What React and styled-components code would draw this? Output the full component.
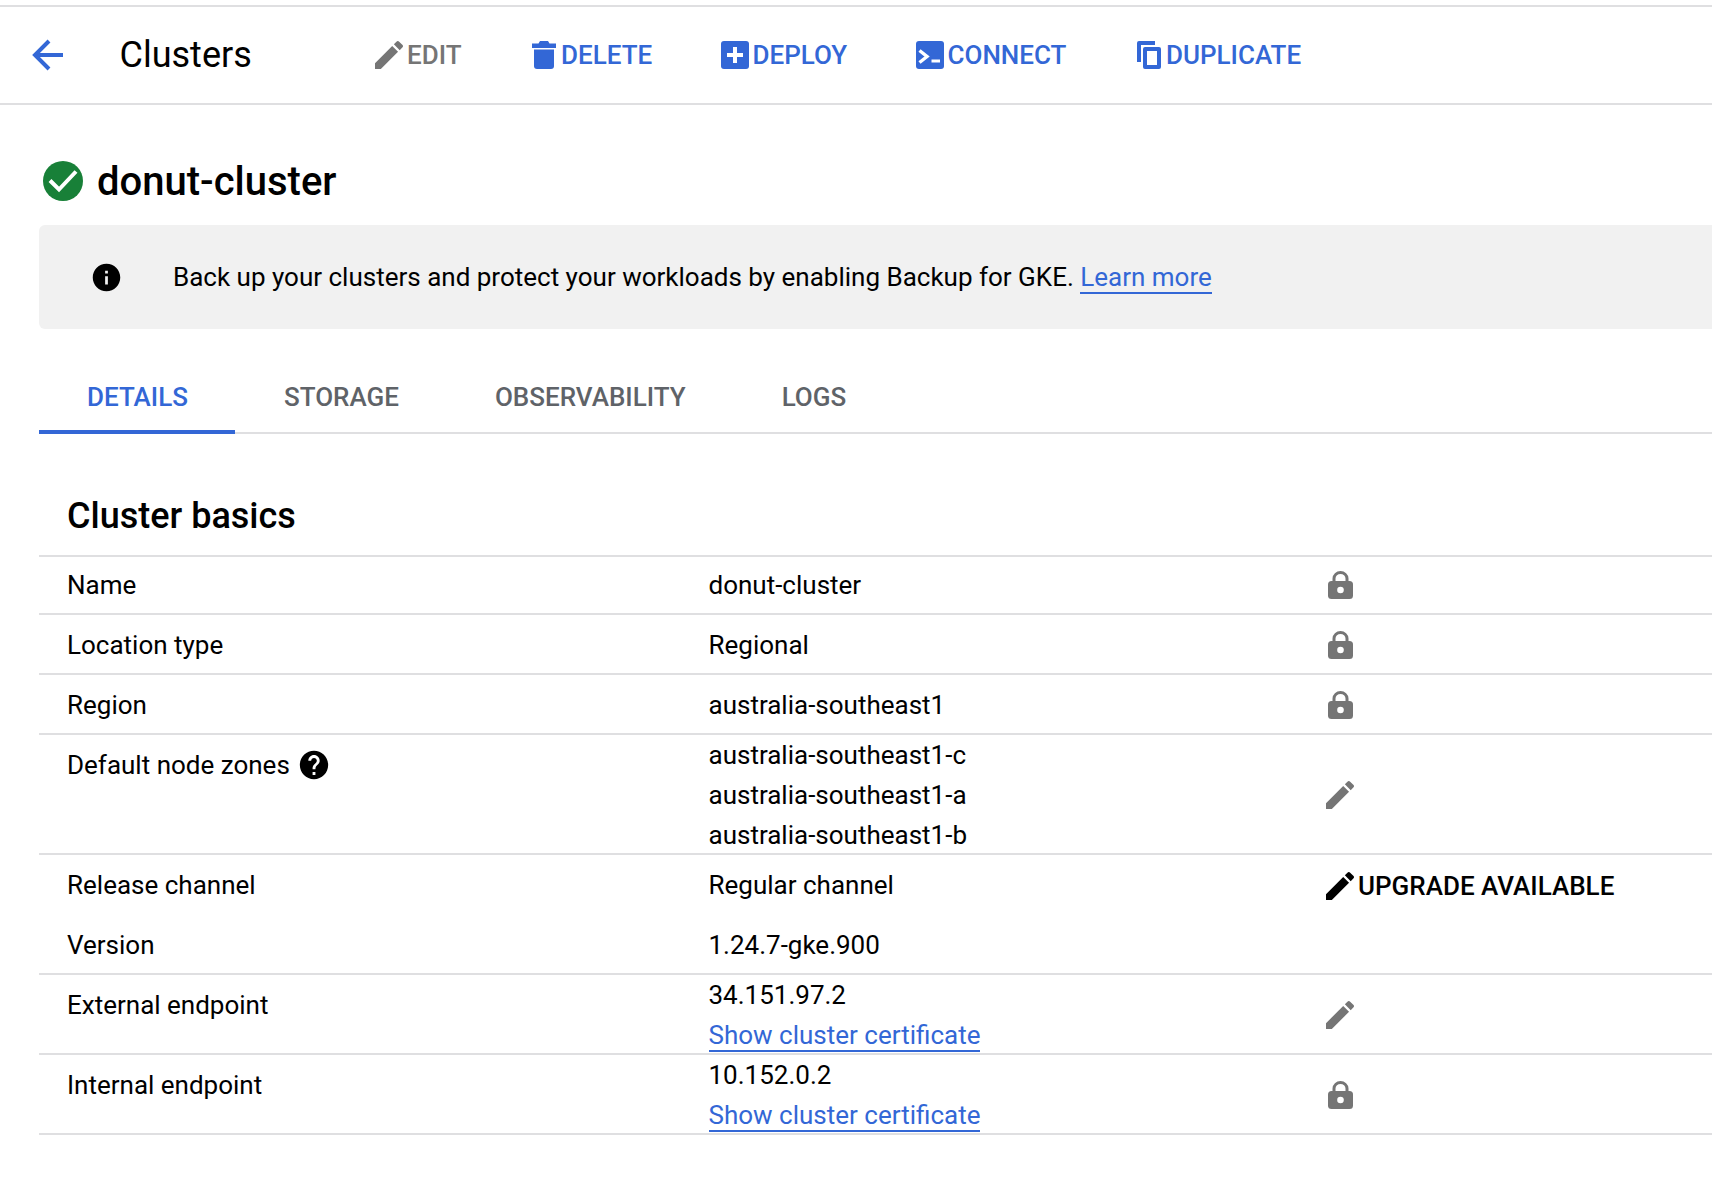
import React from "react";
import styled, { createGlobalStyle } from "styled-components";

const Global = createGlobalStyle`
  html, body { margin: 0; padding: 0; background: #fff; }
  body { font-family: Roboto, "Liberation Sans", sans-serif; color: #000; }
  * { box-sizing: border-box; }
`;

const BLUE = "#3367d6";
const GREY = "#757575";
const LINE = "#dfdfe1";

const P = {
  edit: "M3 17.25V21h3.75L17.81 9.94l-3.75-3.75L3 17.25zM20.71 7.04c.39-.39.39-1.02 0-1.41l-2.34-2.34c-.39-.39-1.02-.39-1.41 0l-1.83 1.83 3.75 3.75 1.83-1.83z",
  help: "M12 2C6.48 2 2 6.48 2 12s4.48 10 10 10 10-4.48 10-10S17.52 2 12 2zm1 17h-2v-2h2v2zm2.07-7.75l-.9.92C13.45 12.9 13 13.5 13 15h-2v-.5c0-1.1.45-2.1 1.17-2.83l1.24-1.26c.37-.36.59-.86.59-1.41 0-1.1-.9-2-2-2s-2 .9-2 2H8c0-2.21 1.79-4 4-4s4 1.79 4 4c0 .88-.36 1.68-.93 2.25z",
  info: "M12 2C6.48 2 2 6.48 2 12s4.48 10 10 10 10-4.48 10-10S17.52 2 12 2zm1 15h-2v-6h2v6zm0-8h-2V7h2v2z",
};

const Icon = ({ d, size = 24 }) => (
  <svg width={size} height={size} viewBox="0 0 24 24" fill="currentColor" style={{ flex: "none" }}>
    <path d={d} />
  </svg>
);

const PencilIcon = () => (
  <svg width="28" height="28" viewBox="3 3 18 18" fill="currentColor" style={{ flex: "none" }}>
    <path d={P.edit} />
  </svg>
);

const TrashIcon = () => (
  <svg width="24" height="28" viewBox="0 0 24 28" fill="currentColor" style={{ flex: "none" }}>
    <path d="M8 0h8l1.5 2.5H24V7H0V2.5h6.5z" />
    <path d="M2 8.5h20V25a3 3 0 0 1-3 3H5a3 3 0 0 1-3-3z" />
  </svg>
);

const AddBoxIcon = () => (
  <svg width="28" height="28" viewBox="0 0 28 28" style={{ flex: "none" }}>
    <rect width="28" height="28" rx="3" fill="currentColor" />
    <path d="M12 6h4v6h6v4h-6v6h-4v-6H6v-4h6z" fill="#fff" />
  </svg>
);

const TerminalIcon = () => (
  <svg width="28" height="28" viewBox="0 0 28 28" style={{ flex: "none" }}>
    <rect width="28" height="28" rx="3" fill="currentColor" />
    <path d="M3.5 9.5l7.5 6-7.5 6" fill="none" stroke="#fff" strokeWidth="3.4" />
    <rect x="15.5" y="18.5" width="8.5" height="3" fill="#fff" />
  </svg>
);

const CopyIcon = () => (
  <svg width="24" height="28" viewBox="0 0 24 28" fill="currentColor" style={{ flex: "none" }}>
    <path d="M2 0h16v4H4v17H0V2a2 2 0 0 1 2-2z" />
    <path fillRule="evenodd" d="M8 6h14a2 2 0 0 1 2 2v18a2 2 0 0 1-2 2H8a2 2 0 0 1-2-2V8a2 2 0 0 1 2-2zm2 4v14h10V10z" />
  </svg>
);

const LockIcon = () => (
  <svg width="25" height="28" viewBox="0 0 25 28" style={{ flex: "none" }}>
    <path d="M6 11V7.5a6.5 6 0 0 1 13 0V11" fill="none" stroke="currentColor" strokeWidth="3" />
    <rect y="10" width="25" height="18" rx="3.5" fill="currentColor" />
    <circle cx="12.5" cy="19" r="3.3" fill="#fff" />
  </svg>
);

const Page = styled.div`
  width: 1712px;
  min-height: 1200px;
  padding-top: 5px;
  overflow: hidden;
`;
const Header = styled.header`
  height: 100px;
  border-top: 2px solid ${LINE};
  border-bottom: 2px solid ${LINE};
  display: flex;
  align-items: center;
  padding-left: 32px;
`;
const Back = styled.span`
  display: flex;
  width: 87.5px;
  color: ${BLUE};
`;
const Title = styled.h1`
  margin: 0;
  width: 255.5px;
  font-size: 36px;
  font-weight: 400;
`;
const Action = styled.span`
  display: flex;
  align-items: center;
  gap: ${(p) => p.$gap}px;
  width: ${(p) => p.$w}px;
  font-size: 26px;
  font-weight: 500;
  color: ${(p) => (p.$off ? GREY : BLUE)};
`;
const Main = styled.main`
  padding-left: 39px;
`;
const Heading = styled.div`
  display: flex;
  align-items: center;
  gap: 14px;
  height: 120px;
  padding: 32px 0 0 4px;
`;
const Name = styled.h2`
  margin: 0;
  font-size: 40px;
  font-weight: 500;
`;
const Banner = styled.div`
  height: 104px;
  background: #f1f1f1;
  border-radius: 6px 0 0 6px;
  display: flex;
  align-items: center;
  padding-left: 51px;
  font-size: 26px;
`;
const BannerText = styled.span`
  margin-left: 50px;
`;
const TextLink = styled.a`
  color: ${BLUE};
  border-bottom: 2px solid ${BLUE};
`;
const Tabs = styled.nav`
  margin-top: 34px;
  height: 71px;
  display: flex;
  gap: 1px;
  border-bottom: 2px solid ${LINE};
`;
const Tab = styled.div`
  height: 71px;
  padding: 0 47px 0 48px;
  display: flex;
  align-items: center;
  font-size: 26px;
  font-weight: 500;
  color: ${(p) => (p.$active ? BLUE : "#5f6368")};
  border-bottom: 4px solid ${(p) => (p.$active ? BLUE : "transparent")};
`;
const SectionTitle = styled.h3`
  margin: 0;
  height: 121px;
  padding: 61px 0 0 28px;
  font-size: 36px;
  line-height: 42px;
  font-weight: 500;
`;
const Table = styled.div`
  border-top: 2px solid ${LINE};
`;
const Row = styled.div`
  display: grid;
  grid-template-columns: 641.5px 612.5px 1fr;
  padding-left: 28px;
  height: ${(p) => p.$h}px;
  border-bottom: 2px solid ${LINE};
  font-size: 26px;
`;
const Label = styled.div`
  display: flex;
  flex-direction: column;
`;
const LabelLine = styled.div`
  height: ${(p) => p.$h ?? 60}px;
  display: flex;
  align-items: center;
  gap: 7px;
`;
const Value = styled.div`
  display: flex;
  flex-direction: column;
`;
const ValueLine = styled.div`
  height: ${(p) => p.$h}px;
  display: flex;
  align-items: center;
`;
const Side = styled.div`
  display: flex;
  align-items: ${(p) => (p.$top ? "flex-start" : "center")};
  padding-left: ${(p) => p.$inset}px;
  padding-bottom: ${(p) => p.$lift ?? 0}px;
  color: ${(p) => (p.$top ? "#000" : GREY)};
`;
const Upgrade = styled.div`
  height: 62px;
  display: flex;
  align-items: center;
  gap: 4px;
  font-weight: 500;
`;

const rows = [
  { h: 58, label: "Name", value: "donut-cluster", lh: 56 },
  { h: 60, label: "Location type", value: "Regional", lh: 60 },
  { h: 60, label: "Region", value: "australia-southeast1", lh: 60 },
];

export default function App() {
  return (
    <Page>
      <Global />
      <Header>
        <Back>
          <svg width="31" height="32" viewBox="0 0 31 32" fill="none" stroke={BLUE} strokeWidth="4">
            <path d="M31 16H3M17 2L3 16l14 14" />
          </svg>
        </Back>
        <Title>Clusters</Title>
        <Action $off $w={157} $gap={4}><PencilIcon />EDIT</Action>
        <Action $w={189} $gap={5}><TrashIcon />DELETE</Action>
        <Action $w={195} $gap={3.5}><AddBoxIcon />DEPLOY</Action>
        <Action $w={221} $gap={3.5}><TerminalIcon />CONNECT</Action>
        <Action $w={190} $gap={5}><CopyIcon />DUPLICATE</Action>
      </Header>
      <Main>
        <Heading>
          <svg width="40" height="40" viewBox="0 0 40 40" style={{ flex: "none" }}>
            <circle cx="20" cy="20" r="20" fill="#188038" />
            <path d="M7 19.5l9 9 17-18" fill="none" stroke="#fff" strokeWidth="4" />
          </svg>
          <Name>donut-cluster</Name>
        </Heading>
        <Banner>
          <Icon d={P.info} size={33} />
          <BannerText>
            Back up your clusters and protect your workloads by enabling Backup for GKE. <TextLink>Learn more</TextLink>
          </BannerText>
        </Banner>
        <Tabs>
          <Tab $active>DETAILS</Tab>
          <Tab>STORAGE</Tab>
          <Tab>OBSERVABILITY</Tab>
          <Tab>LOGS</Tab>
        </Tabs>
        <SectionTitle>Cluster basics</SectionTitle>
        <Table>
          {rows.map((r) => (
            <Row key={r.label} $h={r.h}>
              <Label><LabelLine $h={r.lh}>{r.label}</LabelLine></Label>
              <Value><ValueLine $h={r.lh}>{r.value}</ValueLine></Value>
              <Side $inset={7}><LockIcon /></Side>
            </Row>
          ))}
          <Row $h={120}>
            <Label>
              <LabelLine>Default node zones <Icon d={P.help} size={34} /></LabelLine>
            </Label>
            <Value>
              <ValueLine $h={40}>australia-southeast1-c</ValueLine>
              <ValueLine $h={40}>australia-southeast1-a</ValueLine>
              <ValueLine $h={40}>australia-southeast1-b</ValueLine>
            </Value>
            <Side $inset={5}><PencilIcon /></Side>
          </Row>
          <Row $h={120}>
            <Label>
              <LabelLine>Release channel</LabelLine>
              <LabelLine>Version</LabelLine>
            </Label>
            <Value>
              <ValueLine $h={60}>Regular channel</ValueLine>
              <ValueLine $h={60}>1.24.7-gke.900</ValueLine>
            </Value>
            <Side $top $inset={5}><Upgrade><PencilIcon />UPGRADE AVAILABLE</Upgrade></Side>
          </Row>
          <Row $h={80}>
            <Label><LabelLine>External endpoint</LabelLine></Label>
            <Value>
              <ValueLine $h={40}>34.151.97.2</ValueLine>
              <ValueLine $h={42}><TextLink>Show cluster certificate</TextLink></ValueLine>
            </Value>
            <Side $inset={5} $lift={2}><PencilIcon /></Side>
          </Row>
          <Row $h={80}>
            <Label><LabelLine>Internal endpoint</LabelLine></Label>
            <Value>
              <ValueLine $h={40}>10.152.0.2</ValueLine>
              <ValueLine $h={42}><TextLink>Show cluster certificate</TextLink></ValueLine>
            </Value>
            <Side $inset={7} $lift={2}><LockIcon /></Side>
          </Row>
        </Table>
      </Main>
    </Page>
  );
}
